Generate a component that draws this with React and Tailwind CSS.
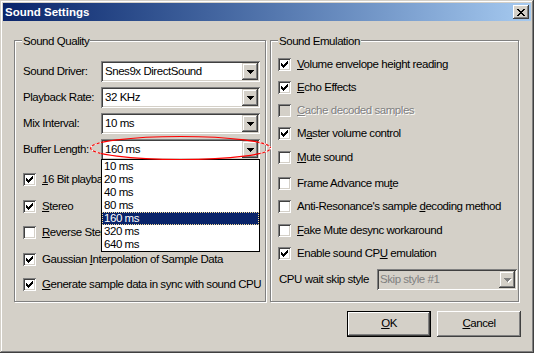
import React from 'react';

const SUNKEN = 'shadow-[inset_1px_1px_#808080,inset_-1px_-1px_#fff,inset_2px_2px_#404040,inset_-2px_-2px_#d4d0c8]';
const RAISED = 'shadow-[inset_-1px_-1px_#404040,inset_1px_1px_#d4d0c8,inset_-2px_-2px_#808080,inset_2px_2px_#fff]';
const BUTTON = 'shadow-[inset_-1px_-1px_#404040,inset_1px_1px_#fff,inset_-2px_-2px_#808080,inset_2px_2px_#d4d0c8]';

function Pixels({ rows, color = '#000' }) {
  return (
    <svg width={rows[0].length} height={rows.length} shapeRendering="crispEdges" className="block">
      {rows.flatMap((r, y) =>
        [...r].map((c, x) =>
          c === '#' ? <rect key={`${x}-${y}`} x={x} y={y} width="1" height="1" fill={color} /> : null
        )
      )}
    </svg>
  );
}

const CHECK = ['......#', '.....##', '#...###', '##.###.', '#####..', '.###...', '..#....'];
const ARROW = ['#######', '.#####.', '..###..', '...#...'];
const CLOSE = ['##....##', '.##..##.', '..####..', '...##...', '..####..', '.##..##.', '##....##'];

function CheckBox({ checked, disabled }) {
  return (
    <span
      className={`w-[13px] h-[13px] shrink-0 flex items-center justify-center ${SUNKEN} ${
        disabled ? 'bg-[#d4d0c8]' : 'bg-white'
      }`}
    >
      {checked && <Pixels rows={CHECK} />}
    </span>
  );
}

function Option({ checked, disabled, children, className = '' }) {
  return (
    <div className={`flex items-center h-[13px] gap-[6px] ${className}`}>
      <CheckBox checked={checked} disabled={disabled} />
      <span
        className={`leading-[13px] whitespace-nowrap ${
          disabled ? 'text-[#808080] [text-shadow:1px_1px_0_#fff]' : ''
        }`}
      >
        {children}
      </span>
    </div>
  );
}

function Combo({ value, disabled, className = '', children }) {
  return (
    <div
      className={`relative h-[21px] flex items-center ${SUNKEN} ${
        disabled ? 'bg-[#d4d0c8] text-[#808080]' : 'bg-white'
      } ${className}`}
    >
      <span className={`flex-1 whitespace-nowrap ${disabled ? 'pl-[3px]' : 'pl-[4px]'}`}>{value}</span>
      <span className={`w-[16px] h-[17px] mr-[2px] flex items-center justify-center bg-[#d4d0c8] ${RAISED}`}>
        {disabled ? (
          <span className="relative">
            <span className="absolute left-[1px] top-[1px]">
              <Pixels rows={ARROW} color="#fff" />
            </span>
            <span className="relative">
              <Pixels rows={ARROW} color="#808080" />
            </span>
          </span>
        ) : (
          <Pixels rows={ARROW} />
        )}
      </span>
      {children}
    </div>
  );
}

function Group({ title, className = '', children }) {
  return (
    <div
      className={`relative h-[262px] border border-[#808080] shadow-[1px_1px_0_#fff,inset_1px_1px_0_#fff] ${className}`}
    >
      <span className="absolute left-[7px] -top-[6px] px-[1px] bg-[#d4d0c8] leading-[13px]">{title}</span>
      {children}
    </div>
  );
}

const BUFFERS = ['10 ms', '20 ms', '40 ms', '80 ms', '160 ms', '320 ms', '640 ms'];

function ComboRow({ label, value, className = '', children }) {
  return (
    <div className={`flex items-center ${className}`}>
      <span className="w-[78px] whitespace-nowrap">{label}</span>
      <Combo value={value} className="w-[159px]">
        {children}
      </Combo>
    </div>
  );
}

export default function App() {
  return (
    <div
      className={`relative w-[534px] h-[353px] overflow-hidden bg-[#d4d0c8] p-[3px] flex flex-col text-[11.5px] tracking-[-0.45px] text-black font-['Liberation_Sans',Arial,sans-serif] shadow-[inset_-1px_-1px_#404040,inset_1px_1px_#d4d0c8,inset_-2px_-2px_#808080,inset_2px_2px_#fff]`}
    >
      {/* title bar */}
      <div className="h-[18px] shrink-0 flex items-center justify-between pl-[2px] pr-[2px] bg-gradient-to-r from-[#0a246a] to-[#a6caf0]">
        <span className="text-white font-bold text-[11.5px] tracking-normal leading-[18px]">Sound Settings</span>
        <span className={`w-[16px] h-[14px] flex items-center justify-center bg-[#d4d0c8] ${BUTTON}`}>
          <Pixels rows={CLOSE} />
        </span>
      </div>

      <div className="flex mt-[19px] pl-[11px] gap-[4px]">
        {/* left group */}
        <Group title="Sound Quality" className="w-[252px]">
          <div className="flex flex-col pt-[20px] pl-[8px]">
            <ComboRow label="Sound Driver:" value="Snes9x DirectSound" />
            <ComboRow label="Playback Rate:" value="32 KHz" className="mt-[5px]" />
            <ComboRow label="Mix Interval:" value="10 ms" className="mt-[5px]" />
            <ComboRow label="Buffer Length:" value="160 ms" className="mt-[5px]">
              <div className="absolute left-0 top-[20px] w-[159px] z-10 bg-white border border-black">
                {BUFFERS.map((b) => (
                  <div
                    key={b}
                    className={`h-[13px] leading-[13px] pl-[2px] ${
                      b === '160 ms'
                        ? 'bg-[#0a246a] text-white outline outline-1 outline-dotted outline-[#f5db95] -outline-offset-1'
                        : ''
                    }`}
                  >
                    {b}
                  </div>
                ))}
              </div>
            </ComboRow>

            <Option checked className="mt-[13px]">
              <u>1</u>6 Bit playback
            </Option>
            <Option checked className="mt-[14px]">
              <u>S</u>tereo
            </Option>
            <Option className="mt-[13px]">
              <u>R</u>everse Stereo
            </Option>
            <Option checked className="mt-[14px]">
              Gaussian <u>I</u>nterpolation of Sample Data
            </Option>
            <Option checked className="mt-[12px]">
              <u>G</u>enerate sample data in sync with sound CPU
            </Option>
          </div>
        </Group>

        {/* right group */}
        <Group title="Sound Emulation" className="w-[249px]">
          <div className="flex flex-col pt-[17px] pl-[7px]">
            <Option checked>
              <u>V</u>olume envelope height reading
            </Option>
            <Option checked className="mt-[10px]">
              <u>E</u>cho Effects
            </Option>
            <Option disabled className="mt-[10px]">
              <u>C</u>ache decoded samples
            </Option>
            <Option checked className="mt-[10px]">
              M<u>a</u>ster volume control
            </Option>
            <Option className="mt-[11px]">
              <u>M</u>ute sound
            </Option>
            <Option className="mt-[13px]">
              Frame Advance mu<u>t</u>e
            </Option>
            <Option className="mt-[10px]">
              Anti-Resonance's sample <u>d</u>ecoding method
            </Option>
            <Option className="mt-[11px]">
              <u>F</u>ake Mute desync workaround
            </Option>
            <Option checked className="mt-[10px]">
              Enable sound CP<u>U</u> emulation
            </Option>
            <div className="flex items-center mt-[9px]">
              <span className="w-[99px] pl-[1px] whitespace-nowrap">CPU wait skip style</span>
              <Combo value="Skip style #1" disabled className="w-[140px]" />
            </div>
          </div>
        </Group>
      </div>

      {/* buttons */}
      <div className="flex justify-end gap-[6px] pr-[10px] mt-[9px]">
        <button className="w-[84px] h-[26px] border border-black bg-[#d4d0c8] flex">
          <span className={`flex-1 flex items-center justify-center ${BUTTON}`}>
            <span>
              <u>O</u>K
            </span>
          </span>
        </button>
        <button className={`w-[84px] h-[26px] bg-[#d4d0c8] flex items-center justify-center ${BUTTON}`}>
          <span>
            <u>C</u>ancel
          </span>
        </button>
      </div>

      {/* red annotation ellipse: solid over the combo, red/white dashes over the grey */}
      <svg
        className="absolute left-[88px] top-[134px] z-20 pointer-events-none"
        width="186"
        height="28"
        viewBox="0 0 186 28"
      >
        <defs>
          <clipPath id="outside">
            <rect x="0" y="0" width="13" height="28" />
            <rect x="171" y="0" width="15" height="28" />
          </clipPath>
        </defs>
        <ellipse cx="92.5" cy="14" rx="90" ry="11.5" fill="none" stroke="#f00" strokeWidth="1.2" />
        <ellipse
          cx="92.5"
          cy="14"
          rx="90"
          ry="11.5"
          fill="none"
          stroke="#fff"
          strokeWidth="1.2"
          strokeDasharray="2 3"
          clipPath="url(#outside)"
        />
      </svg>
    </div>
  );
}
